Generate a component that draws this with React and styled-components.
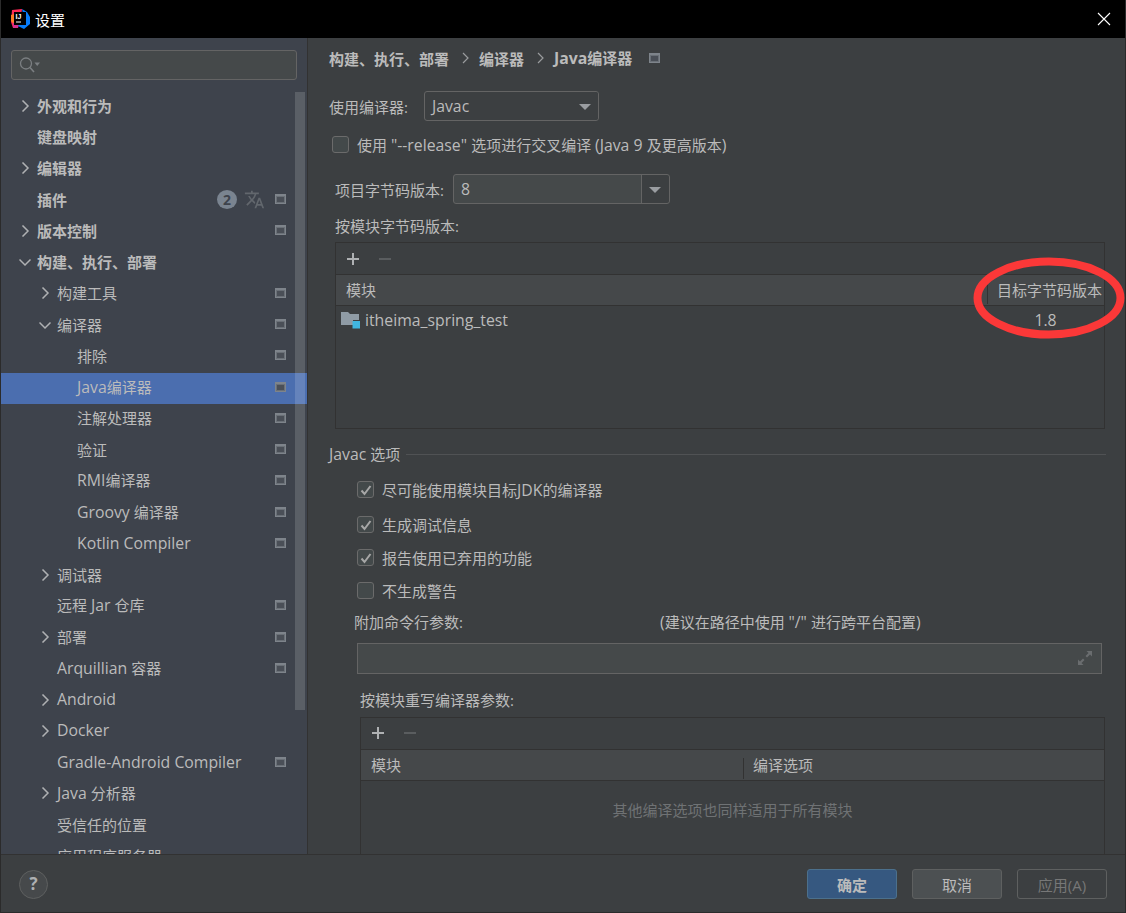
import React from 'react';
import styled, { createGlobalStyle } from 'styled-components';
import { MdTranslate } from 'react-icons/md';

const FONT = `"Open Sans", "Noto Sans CJK SC", sans-serif`;

const GlobalStyle = createGlobalStyle`
  html, body { margin: 0; padding: 0; background: #3c3f41; }
  * { box-sizing: border-box; }
  body { font-family: ${FONT}; font-size: 15px; color: #bbbbbb; }
`;

const TREE = [
  { label: '外观和行为', level: 0, arrow: 'right', bold: true },
  { label: '键盘映射', level: 0, bold: true },
  { label: '编辑器', level: 0, arrow: 'right', bold: true },
  { label: '插件', level: 0, bold: true, badge: true, icon: true },
  { label: '版本控制', level: 0, arrow: 'right', bold: true, icon: true },
  { label: '构建、执行、部署', level: 0, arrow: 'down', bold: true },
  { label: '构建工具', level: 1, arrow: 'right', icon: true },
  { label: '编译器', level: 1, arrow: 'down', icon: true },
  { label: '排除', level: 2, icon: true },
  { label: 'Java编译器', level: 2, icon: true, selected: true },
  { label: '注解处理器', level: 2, icon: true },
  { label: '验证', level: 2, icon: true },
  { label: 'RMI编译器', level: 2, icon: true },
  { label: 'Groovy 编译器', level: 2, icon: true },
  { label: 'Kotlin Compiler', level: 2, icon: true },
  { label: '调试器', level: 1, arrow: 'right' },
  { label: '远程 Jar 仓库', level: 1, icon: true },
  { label: '部署', level: 1, arrow: 'right', icon: true },
  { label: 'Arquillian 容器', level: 1, icon: true },
  { label: 'Android', level: 1, arrow: 'right' },
  { label: 'Docker', level: 1, arrow: 'right' },
  { label: 'Gradle-Android Compiler', level: 1, icon: true },
  { label: 'Java 分析器', level: 1, arrow: 'right' },
  { label: '受信任的位置', level: 1 },
  { label: '应用程序服务器', level: 1 },
];

const Window = styled.div`
  width: 1126px;
  height: 913px;
  display: flex;
  flex-direction: column;
  border: 1px solid #2b2b2b;
  border-top: 0;
  background: #3c3f41;
  overflow: hidden;
  position: relative;
`;

const TitleBar = styled.div`
  height: 38px;
  flex: none;
  margin: 0 -1px;
  padding: 0 15px 0 10px;
  background: #000;
  display: flex;
  align-items: center;
  color: #fff;
  font-size: 15px;
`;

const TitleText = styled.span`
  margin-left: 5px;
  flex: 1;
`;

const Body = styled.div`
  flex: 1;
  min-height: 0;
  display: flex;
`;

const Sidebar = styled.aside`
  width: 307px;
  flex: none;
  background: #3e434c;
  border-right: 1px solid #323232;
  position: relative;
  overflow: hidden;
`;

const SearchBox = styled.div`
  height: 30px;
  margin: 12px 10px 11.75px 10px;
  padding: 0 7px;
  display: flex;
  align-items: center;
  background: #45494a;
  border: 1px solid #646464;
  border-radius: 3px;
`;

const Row = styled.div`
  height: 31.25px;
  position: relative;
  display: flex;
  align-items: center;
  padding: 0 21px 4px ${p => 36 + p.$level * 20}px;
  font-weight: ${p => (p.$bold ? 700 : 400)};
  background: ${p => (p.$selected ? '#4b6eaf' : 'transparent')};
  white-space: nowrap;
`;

const RowLabel = styled.span`
  flex: 1;
`;

// the latin runs sit a little larger than the CJK ones in the reference
const Latin = styled.span`
  font-size: 15.8px;
`;

const Arrow = styled.svg`
  position: absolute;
  left: ${p => 18 + p.$level * 20}px;
  top: 8px;
  width: 12px;
  height: 12px;
  fill: none;
  stroke: #afb1b3;
  stroke-width: 1.5;
`;

const Badge = styled.span`
  width: 20px;
  height: 19px;
  border-radius: 50%;
  margin-right: 7px;
  background: #7a8490;
  color: #3e434c;
  font-size: 14px;
  line-height: 19px;
  text-align: center;
`;

const Translate = styled(MdTranslate)`
  width: 21px;
  height: 21px;
  color: #62676d;
  margin-right: 10px;
`;

const ScopeBox = styled.span`
  display: inline-block;
  flex: none;
  width: 11px;
  height: 10px;
  border: 1px solid #7e848b;
  border-top-width: 2px;
  background: #4a4f57;
  box-shadow: inset 0 0 0 1px #6a7077;
`;

const ScrollThumb = styled.div`
  position: absolute;
  top: 54px;
  left: 294px;
  width: 10px;
  height: 618px;
  background: rgba(255, 255, 255, 0.15);
`;

const Content = styled.main`
  flex: 1;
  min-width: 0;
  overflow: hidden;
  padding: 9px 20px 0 21px;
  position: relative;
`;

const Crumbs = styled.div`
  height: 22px;
  display: flex;
  align-items: center;
  font-weight: 700;
`;

const CrumbSep = styled.svg`
  width: 10px;
  height: 12px;
  margin: 0 8px 0 12px;
  fill: none;
  stroke: #9a9c9e;
  stroke-width: 1.2;
`;

const CrumbIcon = styled.span`
  margin-left: 17px;
  display: flex;
`;

const FormRow = styled.div`
  display: flex;
  align-items: center;
  margin: ${p => p.$margin || 0};
  padding-left: ${p => p.$indent || 0}px;
  height: ${p => p.$height || 30}px;
`;

const Combo = styled.div`
  width: ${p => p.$width}px;
  height: 30px;
  margin-left: ${p => p.$gap}px;
  padding-left: 7px;
  display: flex;
  align-items: center;
  justify-content: space-between;
  border: 1px solid #646464;
  border-radius: 3px;
  background: ${p => (p.$editable ? '#45494a' : '#3c3f41')};
`;

const ComboArrow = styled.span`
  width: ${p => (p.$split ? '28px' : '26px')};
  height: 100%;
  display: flex;
  align-items: center;
  justify-content: center;
  border-left: ${p => (p.$split ? '1px solid #646464' : '0')};
  background: #3c3f41;
  border-radius: 0 3px 3px 0;
  &::after {
    content: '';
    border-left: 6px solid transparent;
    border-right: 6px solid transparent;
    border-top: 6px solid #9a9da1;
    margin-top: 1px;
  }
`;

const CheckRow = styled.div`
  display: flex;
  align-items: center;
  height: ${p => p.$height || 33.2}px;
  padding-left: ${p => p.$indent}px;
  margin-top: ${p => p.$top || 0}px;
`;

const Check = styled.span`
  width: 17px;
  height: 17px;
  flex: none;
  margin-right: 8px;
  display: flex;
  align-items: center;
  justify-content: center;
  background: #43494a;
  border: 1px solid #6b6b6b;
  border-radius: 3px;
  svg { width: 12px; height: 12px; fill: none; stroke: #a7a7a7; stroke-width: 2; }
`;

const FieldLabel = styled.div`
  padding-left: ${p => p.$indent}px;
  height: 22px;
  line-height: 22px;
  margin-top: ${p => p.$top || 0}px;
`;

const Table = styled.div`
  margin: ${p => p.$margin};
  height: ${p => p.$height}px;
  border: 1px solid #323232;
`;

const TableTools = styled.div`
  height: 31px;
  padding-left: 10px;
  display: flex;
  align-items: center;
  gap: 18px;
`;

const ToolIcon = styled.svg`
  width: 14px;
  height: 14px;
  stroke: ${p => (p.$off ? '#5a5d5f' : '#afb1b3')};
  stroke-width: 2;
`;

const TableHead = styled.div`
  height: 32px;
  display: grid;
  grid-template-columns: ${p => p.$columns};
  background: #45484a;
  border-top: 1px solid #323232;
  border-bottom: 1px solid #323232;
`;

const HeadCell = styled.div`
  position: relative;
  padding-left: 10px;
  line-height: 30px;
  white-space: nowrap;
  &:not(:first-child)::before {
    content: '';
    position: absolute;
    left: 0;
    top: 8px;
    bottom: 1px;
    width: 1px;
    background: #323232;
  }
`;

const TableRow = styled.div`
  height: 28px;
  display: grid;
  grid-template-columns: 1fr 117px;
  align-items: center;
`;

const ModuleCell = styled.div`
  display: flex;
  align-items: center;
  padding-left: 5px;
  gap: 4px;
`;

const TargetCell = styled.div`
  text-align: center;
`;

const SectionTitle = styled.div`
  display: flex;
  align-items: center;
  height: 22px;
  margin-top: 14px;
  gap: 6px;
  &::after {
    content: '';
    flex: 1;
    height: 1px;
    background: #505254;
    margin-right: -1px;
  }
`;

const HintRow = styled.div`
  display: flex;
  height: 22px;
  line-height: 22px;
  padding-left: 25px;
  margin-top: 3px;
`;

const Hint = styled.span`
  margin-left: 197px;
`;

const ArgsInput = styled.div`
  height: 31px;
  margin: 10px 3px 0 28px;
  padding-right: 8px;
  display: flex;
  align-items: center;
  justify-content: flex-end;
  background: #45494a;
  border: 1px solid #646464;
`;

const EmptyText = styled.div`
  margin-top: 18px;
  text-align: center;
  color: #6f7274;
`;

const Annotation = styled.svg`
  position: absolute;
  left: 972px;
  top: 257px;
  width: 152px;
  height: 82px;
  fill: none;
  stroke: #fb3838;
  stroke-width: 8;
  pointer-events: none;
`;

const Footer = styled.footer`
  height: 58px;
  flex: none;
  padding: 1px 18px 0;
  display: flex;
  align-items: center;
  gap: 15px;
  border-top: 1px solid #323232;
  background: #3c3f41;
`;

const HelpButton = styled.span`
  width: 29px;
  height: 29px;
  margin-right: auto;
  border-radius: 50%;
  background: #46494b;
  border: 1px solid #5e6060;
  text-align: center;
  line-height: 26px;
  font-weight: 700;
  font-size: 17px;
  color: #aeb0b2;
`;

const Button = styled.button`
  width: 90px;
  height: 30px;
  padding: 0;
  font-family: ${FONT};
  font-size: 15px;
  font-weight: ${p => (p.$primary ? 700 : 400)};
  color: ${p => (p.$disabled ? '#777' : '#bbbbbb')};
  background: ${p => (p.$primary ? '#365880' : p.$disabled ? '#3c3f41' : '#4c5052')};
  border: 1px solid ${p => (p.$primary ? '#4c708c' : '#5e6060')};
  border-radius: 3px;
`;

const Mixed = ({ text }) =>
  text.split(/([\x21-\x7e][\x20-\x7e]*)/).map((part, i) =>
    i % 2 ? <Latin key={i}>{part}</Latin> : part
  );

const LogoMark = () => (
  <svg width="20" height="20" viewBox="0 0 20 20">
    <path d="M2 1 L12 0 L11 8 L3 19 L1 13 Z" fill="#fe2857" />
    <path d="M1 6 L4 5 L4 15 L1 12 Z" fill="#fe7c27" />
    <path d="M3 14 L10 13 L8 19 L3 19 Z" fill="#d62f8d" />
    <path d="M12 0 L17 3 L20 8 L20 15 L14 20 L8 17 L14 10 Z" fill="#087cfa" />
    <rect x="4" y="3" width="12" height="13" fill="#000" />
    <rect x="6" y="12.5" width="5" height="1" fill="#fff" />
    <text x="5.6" y="10" fill="#fff" fontFamily="Liberation Sans, sans-serif" fontSize="7" fontWeight="700">IJ</text>
  </svg>
);

const SearchIcon = () => (
  <svg width="22" height="18" viewBox="0 0 22 18" fill="none">
    <circle cx="7" cy="7.5" r="5.5" stroke="#7b7f82" strokeWidth="1.3" />
    <path d="M11 11.5 L15 16" stroke="#7b7f82" strokeWidth="1.6" />
    <path d="M15.5 6.5 H21 L18.2 10 Z" fill="#7b7f82" />
  </svg>
);

const CloseIcon = () => (
  <svg width="14" height="14" viewBox="0 0 14 14" stroke="#fff" strokeWidth="1.1">
    <path d="M1 1 L13 13 M13 1 L1 13" />
  </svg>
);

const ModuleIcon = () => (
  <svg width="20" height="18" viewBox="0 0 20 18">
    <path d="M0 1 H7 L9 3 H18 V9 H12 V14 H0 Z" fill="#8f9ba5" />
    <rect x="11.5" y="10" width="7.5" height="7.5" fill="#40b6e0" />
  </svg>
);

const ExpandIcon = () => (
  <svg width="16" height="16" viewBox="0 0 16 16" fill="#6a6d6f">
    <path d="M9.5 1 H15 V6.5 L13 4.5 L10 7.5 L8.5 6 L11.5 3 Z" />
    <path d="M6.5 15 H1 V9.5 L3 11.5 L6 8.5 L7.5 10 L4.5 13 Z" />
  </svg>
);

const TableToolbar = () => (
  <TableTools>
    <ToolIcon viewBox="0 0 14 14"><path d="M7 1 V13 M1 7 H13" /></ToolIcon>
    <ToolIcon $off viewBox="0 0 14 14"><path d="M1 7 H13" /></ToolIcon>
  </TableTools>
);

const TreeRow = ({ item }) => (
  <Row $level={item.level} $bold={item.bold} $selected={item.selected}>
    {item.arrow && (
      <Arrow $level={item.level} viewBox="0 0 12 12">
        <path d={item.arrow === 'right' ? 'M3.5 0.5 L9 6 L3.5 11.5' : 'M0.5 3.5 L6 9 L11.5 3.5'} />
      </Arrow>
    )}
    <RowLabel><Mixed text={item.label} /></RowLabel>
    {item.badge && <Badge>2</Badge>}
    {item.badge && <Translate />}
    {item.icon && <ScopeBox />}
  </Row>
);

const CheckItem = ({ checked, text, indent, height, top }) => (
  <CheckRow $indent={indent} $height={height} $top={top}>
    <Check>
      {checked && <svg viewBox="0 0 12 12"><path d="M1.5 6.5 L4.5 10 L10.5 2" /></svg>}
    </Check>
    <span><Mixed text={text} /></span>
  </CheckRow>
);

const App = () => (
  <Window>
    <GlobalStyle />
    <TitleBar>
      <LogoMark />
      <TitleText>设置</TitleText>
      <CloseIcon />
    </TitleBar>
    <Body>
      <Sidebar>
        <SearchBox><SearchIcon /></SearchBox>
        {TREE.map(item => <TreeRow key={item.label} item={item} />)}
        <ScrollThumb />
      </Sidebar>
      <Content>
        <Crumbs>
          构建、执行、部署
          <CrumbSep viewBox="0 0 10 12"><path d="M2 1 L7 6 L2 11" /></CrumbSep>
          编译器
          <CrumbSep viewBox="0 0 10 12"><path d="M2 1 L7 6 L2 11" /></CrumbSep>
          <span><Mixed text="Java编译器" /></span>
          <CrumbIcon><ScopeBox /></CrumbIcon>
        </Crumbs>
        <FormRow $margin="22px 0 0 0">
          使用编译器:
          <Combo $width={175} $gap={16}><Latin>Javac</Latin><ComboArrow /></Combo>
        </FormRow>
        <CheckItem indent={3} height={47} text={'使用 "--release" 选项进行交叉编译 (Java 9 及更高版本)'} />
        <FormRow $indent={6} $margin="6px 0 0 0">
          项目字节码版本:
          <Combo $width={217} $gap={9} $editable><Latin>8</Latin><ComboArrow $split /></Combo>
        </FormRow>
        <FieldLabel $indent={6} $top={11}>按模块字节码版本:</FieldLabel>
        <Table $margin="5px 0 0 6px" $height={187}>
          <TableToolbar />
          <TableHead $columns="1fr 117px">
            <HeadCell>模块</HeadCell>
            <HeadCell>目标字节码版本</HeadCell>
          </TableHead>
          <TableRow>
            <ModuleCell><ModuleIcon /><Latin>itheima_spring_test</Latin></ModuleCell>
            <TargetCell><Latin>1.8</Latin></TargetCell>
          </TableRow>
        </Table>
        <SectionTitle><span><Mixed text="Javac 选项" /></span></SectionTitle>
        <CheckItem indent={28} checked height={37} top={6} text="尽可能使用模块目标JDK的编译器" />
        <CheckItem indent={28} checked text="生成调试信息" />
        <CheckItem indent={28} checked text="报告使用已弃用的功能" />
        <CheckItem indent={28} text="不生成警告" />
        <HintRow>
          附加命令行参数:
          <Hint><Mixed text={'(建议在路径中使用 "/" 进行跨平台配置)'} /></Hint>
        </HintRow>
        <ArgsInput><ExpandIcon /></ArgsInput>
        <FieldLabel $indent={31} $top={15}>按模块重写编译器参数:</FieldLabel>
        <Table $margin="6px 0 0 31px" $height={160}>
          <TableToolbar />
          <TableHead $columns="382px 1fr">
            <HeadCell>模块</HeadCell>
            <HeadCell>编译选项</HeadCell>
          </TableHead>
          <EmptyText>其他编译选项也同样适用于所有模块</EmptyText>
        </Table>
      </Content>
    </Body>
    <Footer>
      <HelpButton>?</HelpButton>
      <Button $primary>确定</Button>
      <Button>取消</Button>
      <Button $disabled>应用(A)</Button>
    </Footer>
    <Annotation viewBox="0 0 152 82"><ellipse cx="76" cy="41" rx="71.5" ry="36.5" /></Annotation>
  </Window>
);

export default App;
